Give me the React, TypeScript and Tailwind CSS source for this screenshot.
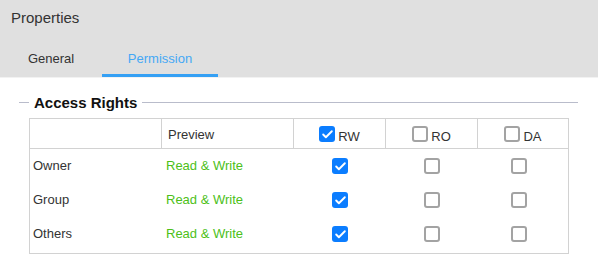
import { Check } from 'lucide-react';

type Box = { checked: boolean };

function CheckBox({ checked }: Box) {
  if (checked) {
    return (
      <span className="flex h-4 w-4 items-center justify-center rounded-[3px] bg-[#0b7dff]">
        <Check size={13} strokeWidth={3.5} className="text-white" />
      </span>
    );
  }
  return <span className="block h-4 w-4 rounded-[3px] border-2 border-[#a3a3a3] bg-white" />;
}

const rows = ['Owner', 'Group', 'Others'];

function App() {
  return (
    <div className="h-[258px] w-[598px] bg-white font-['Liberation_Sans',Arial,sans-serif] text-[#333]">
      <div className="h-[77px] bg-[#e0e0e0]">
        <div className="flex h-[37px] items-center pl-[11px] text-[15px]">Properties</div>
        <div className="flex h-[40px] text-[13px]">
          <div className="flex w-[102px] items-center justify-center border-b-[3px] border-transparent pt-[7px]">
            General
          </div>
          <div className="flex w-[116px] items-center justify-center border-b-[3px] border-[#35a0f4] pt-[7px] text-[#45a8f5]">
            Permission
          </div>
        </div>
      </div>
      <div className="h-px bg-[#f2f2f2]" />

      <div className="mt-[17px] flex items-center pl-[19px] pr-[20px]">
        <div className="h-px w-[10px] bg-[#b9bccb]" />
        <div className="px-[5px] text-[15px] leading-none font-bold text-[#111]">Access Rights</div>
        <div className="h-px flex-1 bg-[#b9bccb]" />
      </div>

      <div className="ml-[29px] mt-[8px] w-[540px] border border-[#d2d2d2] text-[13px]">
        <div className="grid h-[30px] grid-cols-[132px_132px_92px_92px_1fr] border-b border-[#d2d2d2]">
          <div className="border-r border-[#d2d2d2]" />
          <div className="flex items-center border-r border-[#d2d2d2] pl-[6px] pt-[2px]">Preview</div>
          {['RW', 'RO', 'DA'].map((k, i) => (
            <div
              key={k}
              className={`flex items-end justify-center gap-[3px] pb-[5px] ${i < 2 ? 'border-r border-[#d2d2d2]' : ''}`}
            >
              <span className="mb-[1px]">
                <CheckBox checked={i === 0} />
              </span>
              <span className="leading-none">{k}</span>
            </div>
          ))}
        </div>
        {rows.map((r) => (
          <div key={r} className="grid h-[34px] grid-cols-[132px_132px_92px_92px_1fr] items-center last:mb-[2px]">
            <div className="pl-[3px]">{r}</div>
            <div className="pl-[4px] text-[#4dbf19]">Read &amp; Write</div>
            <div className="flex justify-center">
              <CheckBox checked />
            </div>
            <div className="flex justify-center">
              <CheckBox checked={false} />
            </div>
            <div className="flex justify-center pr-[8px]">
              <CheckBox checked={false} />
            </div>
          </div>
        ))}
      </div>
    </div>
  );
}

export default App;
